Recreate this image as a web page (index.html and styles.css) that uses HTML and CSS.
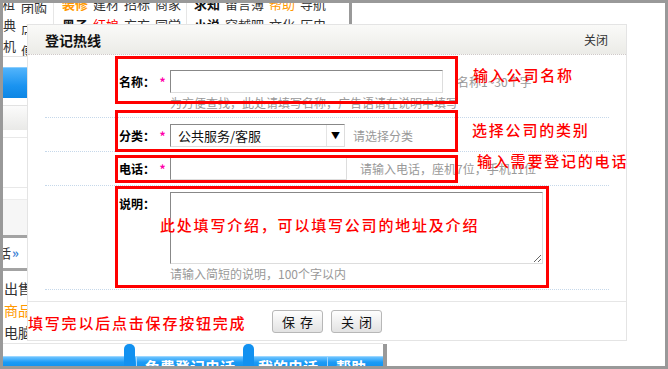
FILE: index.html
```html
<!DOCTYPE html>
<html lang="zh-CN">
<head>
  <meta charset="utf-8">
  <title>登记热线</title>
  <link rel="stylesheet" href="styles.css">
</head>
<body>
  <div class="frame">
    <!-- 背后的网站页面 -->
    <div class="site">
      <div class="nav-wrap">
        <div class="nav">
          <div class="nav-row">
            <div class="c1"><span class="w1 cut">出租</span><span>团购</span></div>
            <div class="c2"><span class="org b">装修</span><span>建材</span><span>招标</span><span>商家</span></div>
            <div class="c3"><span class="b">求知</span><span>留言簿</span><span class="org">帮助</span><span>导航</span></div>
          </div>
          <div class="nav-row">
            <div class="c1"><span class="w1">典</span><span>店铺</span></div>
            <div class="c2"><span class="b">黑子</span><span class="red">红娘</span><span>方方</span><span>同学</span></div>
            <div class="c3"><span class="b">小说</span><span>穿越吧</span><span>文化</span><span>历史</span></div>
          </div>
          <div class="nav-row">
            <div class="c1"><span class="w1">机</span><span>便民</span></div>
            <div class="c2"><span>房产</span><span>汽车</span><span>招聘</span><span>旅游</span></div>
            <div class="c3"><span>音乐</span><span>电影院</span><span>游戏</span><span>论坛</span></div>
          </div>
        </div>
        <div class="nav-bar"></div>
      </div>

      <div class="side">
        <div class="s-blue"></div>
        <div class="s-gray"></div>
        <div class="s-box"></div>
        <div class="s-panel"></div>
        <div class="s-bar"></div>
        <div class="s-news"><span class="cut2">话</span><span class="quote">»</span><span class="dot">·</span></div>
        <div class="s-bar"></div>
        <ul class="s-list">
          <li>出售二手</li>
          <li class="org">商品信息</li>
          <li>电脑配件</li>
        </ul>
      </div>

      <div class="foot-wrap">
        <div class="foot">
          <span class="pill"></span>
          <span class="sep"></span>
          <span class="ft">免费登记电话</span>
          <span class="pill"></span>
          <span class="ft">我的电话</span>
          <span class="sep"></span>
          <span class="ft">帮助</span>
        </div>
        <div class="foot-bar"></div>
      </div>
    </div>

    <!-- 弹出窗口 -->
    <div class="dialog">
      <div class="dlg-head">
        <span class="dlg-title">登记热线</span>
        <span class="dlg-close">关闭</span>
      </div>
      <div class="dlg-body">
        <div class="row row-name">
          <div class="lbl">名称：</div>
          <div class="star">*</div>
          <div class="field">
            <div class="line">
              <input class="inp inp-name" type="text">
              <span class="tip tip-name">名称1~30个字</span>
            </div>
            <div class="tip-below">为方便查找，此处请填写名称，广告语请在说明中填写</div>
          </div>
        </div>
        <div class="row row-cat">
          <div class="lbl">分类：</div>
          <div class="star">*</div>
          <div class="line">
            <div class="sel">
              <span class="sel-text">公共服务/客服</span>
              <span class="sel-btn">▼</span>
            </div>
            <span class="tip tip-cat">请选择分类</span>
          </div>
        </div>
        <div class="row row-tel">
          <div class="lbl">电话：</div>
          <div class="star">*</div>
          <div class="line">
            <input class="inp inp-tel" type="text">
            <span class="tip tip-tel">请输入电话，座机7位，手机11位</span>
          </div>
        </div>
        <div class="row row-desc">
          <div class="lbl">说明：</div>
          <div class="star"></div>
          <div class="field">
            <textarea class="txt"></textarea>
            <div class="tip-below">请输入简短的说明，100个字以内</div>
          </div>
        </div>
      </div>
      <div class="dlg-foot">
        <button class="btn">保存</button>
        <button class="btn">关闭</button>
      </div>
    </div>

    <!-- 红色标注 -->
    <div class="mark mark1"></div>
    <div class="mark mark2"></div>
    <div class="mark mark3"></div>
    <div class="mark mark4"></div>
    <div class="note note1">输入公司名称</div>
    <div class="note note2">选择公司的类别</div>
    <div class="note note3">输入需要登记的电话</div>
    <div class="note note4">此处填写介绍，可以填写公司的地址及介绍</div>
    <div class="note note5">填写完以后点击保存按钮完成</div>
  </div>
</body>
</html>
```

FILE: styles.css
```css
* { margin: 0; padding: 0; box-sizing: border-box; }
body {
  font-family: "Noto Sans CJK SC", "Liberation Sans", sans-serif;
  font-size: 12px;
  color: #333;
  background: #fff;
}
.frame {
  position: relative;
  width: 668px;
  height: 369px;
  border: 3px solid #999;
  overflow: hidden;
  background: #fff;
}

/* 背后的页面 */
.site {
  display: flex;
  flex-direction: column;
  height: 100%;
}
.nav-wrap {
  display: flex;
  align-items: flex-start;
}
.nav {
  width: 346px;
  margin-top: -10px;
  border-bottom: 1px solid #e3e3e3;
  font-size: 13px;
}
.nav-row {
  display: flex;
  height: 21px;
  line-height: 21px;
  white-space: nowrap;
}
.nav-row span { margin-right: 5px; }
.c1 { width: 51px; border-right: 1px solid #e6e6e6; overflow: hidden; }
.c1 .w1 { display: inline-block; width: 18px; margin-right: 0; overflow: hidden; }
.c1 .cut { text-indent: -14px; width: 18px; }
.c2 { width: 133px; padding-left: 8px; border-right: 1px solid #e6e6e6; }
.c3 { padding-left: 7px; }
.b { font-weight: bold; color: #111; }
.org { color: #f90; }
.red { color: #f00; }
.nav-bar {
  width: 3px;
  height: 21px;
  background: #999;
}

.side { width: 380px; }
.s-blue {
  margin-top: 10px;
  height: 31px;
  background: linear-gradient(#52b4fb, #1a93f0 60%, #0d86e4);
  border-top: 1px solid #8acdfd;
}
.s-gray {
  margin-top: 7px;
  height: 25px;
  border-top: 1px solid #e2e2e2;
  background: linear-gradient(#fbfbfb, #e9e9e7);
}
.s-box {
  margin-top: 7px;
  height: 51px;
  border-top: 1px solid #e8e8e8;
  border-bottom: 1px solid #e8e8e8;
}
.s-panel {
  margin-top: 11px;
  height: 36px;
  background: #f6f6f6;
  border-top: 1px solid #ececec;
}
.s-bar { height: 3px; background: #a3a3a3; }
.s-news {
  height: 30px;
  line-height: 30px;
  font-size: 13px;
  white-space: nowrap;
}
.cut2 { display: inline-block; margin-left: -5px; }
.quote { color: #3a7fd5; font-weight: bold; margin-left: 1px; }
.dot { color: #f90; margin-left: 6px; }
.s-list {
  list-style: none;
  padding-top: 6px;
  padding-left: 1px;
  font-size: 14px;
  border-bottom: 1px solid #e6e6e6;
}
.s-list li {
  width: 40px;
  height: 22px;
  line-height: 22px;
  white-space: nowrap;
  overflow: hidden;
}

.foot-wrap {
  display: flex;
  margin-top: auto;
  align-items: flex-end;
}
.foot {
  display: flex;
  width: 380px;
  height: 14px;
  padding-left: 121px;
  background: linear-gradient(#6cc3ff, #1b9bf6 40%, #0c8de9);
  border-top: 1px solid #9ad6ff;
}
.pill {
  width: 11px;
  height: 30px;
  margin-top: -13px;
  border-radius: 5px;
  background: #1291f0;
}
.sep {
  width: 1px;
  height: 14px;
  margin-left: 1px;
  background: #9fd5ff;
}
.ft {
  color: #fff;
  font-size: 15px;
  font-weight: bold;
  line-height: 20px;
  padding: 0 8px;
  white-space: nowrap;
}
.foot .pill + .ft { padding-left: 4px; }
.foot-bar {
  width: 4px;
  height: 26px;
  background: #999;
}

/* 弹出窗口 */
.dialog {
  position: absolute;
  left: 24px;
  top: 21px;
  width: 600px;
  height: 317px;
  border: 1px solid #e4e4e4;
  background: #fff;
}
.dlg-head {
  display: flex;
  justify-content: space-between;
  align-items: center;
  height: 30px;
  padding: 0 18px 0 17px;
  background: linear-gradient(#fafaf8, #ebebe7);
  border-bottom: 1px dotted #cfc9c9;
}
.dlg-title {
  font-size: 14px;
  font-weight: bold;
  color: #111;
}
.dlg-close { color: #333; }
.dlg-body {
  height: 246px;
  padding: 0 17px;
}
.row {
  display: flex;
  align-items: flex-start;
  border-bottom: 1px dotted #c6d8ea;
}
.row-name { height: 63px; padding-top: 15px; }
.row-cat { height: 34px; padding-top: 6px; }
.row-tel { height: 34px; padding-top: 5px; }
.row-desc { height: 104px; padding-top: 6px; }
.lbl {
  width: 110px;
  text-align: right;
  font-weight: bold;
  color: #000;
  line-height: 23px;
}
.star {
  width: 15px;
  text-align: center;
  line-height: 23px;
  color: #f0a;
  font-weight: bold;
}
.line {
  display: flex;
  align-items: center;
}
.inp {
  height: 23px;
  border: 1px solid;
  border-color: #888 #ddd #ddd #888;
  font: inherit;
  background: #fff;
}
.inp-name { width: 273px; }
.inp-tel { width: 177px; }
.tip { color: #999; white-space: nowrap; }
.tip-name { margin-left: 14px; }
.tip-cat { margin-left: 8px; }
.tip-tel { margin-left: 13px; }
.tip-below {
  color: #999;
  margin-top: 3px;
  line-height: 14px;
  white-space: nowrap;
}
.sel {
  display: flex;
  width: 175px;
  height: 23px;
  border: 1px solid;
  border-color: #888 #ddd #ddd #888;
  color: #111;
}
.sel-text {
  flex: 1;
  padding-left: 7px;
  line-height: 21px;
  font-size: 13px;
}
.sel-btn {
  width: 18px;
  font-size: 9px;
  line-height: 21px;
  text-align: center;
  color: #000;
  border-left: 1px solid #e4e4e4;
}
.txt {
  display: block;
  width: 373px;
  height: 72px;
  border: 1px solid;
  border-color: #888 #ddd #ddd #888;
  font: inherit;
}
.dlg-foot {
  height: 40px;
  padding: 8px 0 0 244px;
  border-top: 1px solid #e6e6e6;
  display: flex;
  gap: 8px;
  align-items: flex-start;
}
.btn {
  width: 51px;
  height: 23px;
  border: 1px solid #b7b7b7;
  border-radius: 3px;
  background: linear-gradient(#fefefe, #e2e2e2);
  font-family: inherit;
  font-size: 13px;
  letter-spacing: 5px;
  text-indent: 5px;
  color: #111;
}

/* 红色标注 */
.mark {
  position: absolute;
  border: 3px solid #f00;
}
.mark1 { left: 112px; top: 53px; width: 343px; height: 48px; }
.mark2 { left: 112px; top: 107px; width: 343px; height: 42px; }
.mark3 { left: 112px; top: 152px; width: 343px; height: 28px; }
.mark4 { left: 112px; top: 183px; width: 434px; height: 102px; }
.note {
  position: absolute;
  color: #f00;
  font-size: 15px;
  font-weight: 500;
  line-height: 17px;
  letter-spacing: 1.8px;
  white-space: nowrap;
}
.note1 { left: 470px; top: 63px; }
.note2 { left: 469px; top: 118px; }
.note3 { left: 474px; top: 149px; }
.note4 { left: 157px; top: 213px; }
.note5 { left: 25px; top: 311px; }
```
